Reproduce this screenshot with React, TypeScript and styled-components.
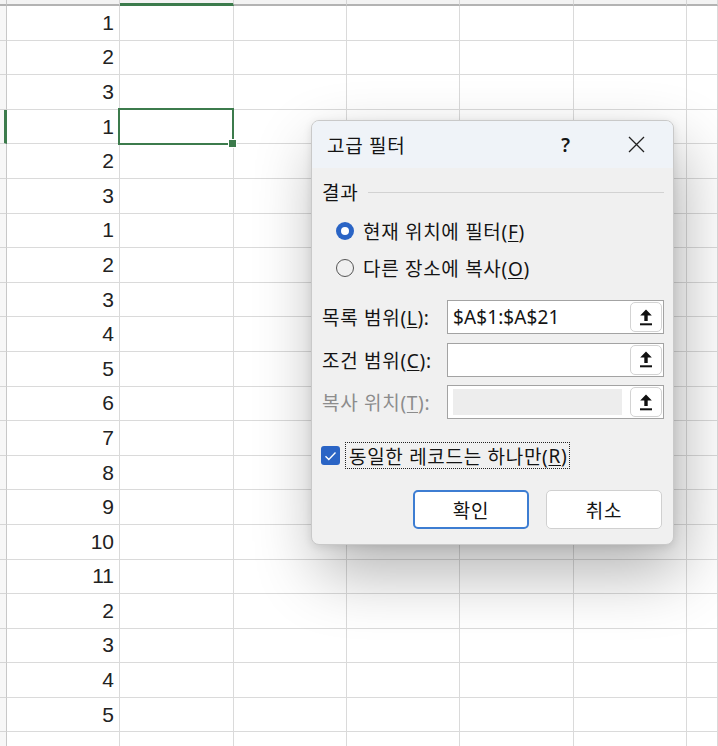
import React from 'react';
import styled, { createGlobalStyle } from 'styled-components';

const GlobalStyle = createGlobalStyle`
  html, body {
    margin: 0;
    padding: 0;
    background: #ffffff;
  }
  body {
    font-family: "Noto Sans", "Noto Sans CJK KR", sans-serif;
    color: #1a1a1a;
  }
`;

const GREEN = '#3c7b4c';
const BLUE = '#2a64c5';
const UI_FONT = `"Noto Sans", "Noto Sans CJK KR", sans-serif`;

// values shown in column A, one per row
const columnA = [1, 2, 3, 1, 2, 3, 1, 2, 3, 4, 5, 6, 7, 8, 9, 10, 11, 2, 3, 4, 5];
const colWidths = [113, 114, 113, 113, 114, 113];
const SELECTED_ROW = 3;
const SELECTED_COL = 1;

const Page = styled.div`
  position: relative;
  width: 718px;
  height: 746px;
  overflow: hidden;
`;

const Sheet = styled.div`
  display: grid;
  grid-template-columns: 7px ${colWidths.map((w) => `${w}px`).join(' ')} 1fr;
  grid-template-rows: 6px repeat(${columnA.length + 1}, 34.6px);
  width: 100%;
  height: 100%;
  background: #ffffff;
`;

const Corner = styled.div`
  background: #f3f3f3;
  border-bottom: 2px solid #b3b3b3;
  border-right: 1px solid #c8c8c8;
  box-sizing: border-box;
`;

const ColHeader = styled.div<{ $selected?: boolean }>`
  background: #f3f3f3;
  box-sizing: border-box;
  border-right: 1px solid #d6d6d6;
  border-bottom: ${(p) => (p.$selected ? `3px solid ${GREEN}` : '2px solid #b3b3b3')};
`;

const RowHeader = styled.div<{ $selected?: boolean }>`
  background: #f7f7f7;
  box-sizing: border-box;
  border-bottom: 1px solid #d6d6d6;
  border-right: ${(p) => (p.$selected ? `3px solid ${GREEN}` : '1px solid #c8c8c8')};
`;

const Cell = styled.div<{ $active?: boolean }>`
  position: relative;
  box-sizing: border-box;
  border-right: 1px solid #dadada;
  border-bottom: 1px solid #dadada;
  display: flex;
  align-items: center;
  justify-content: flex-end;
  padding-right: 5px;
  font-family: "Liberation Sans", Arial, sans-serif;
  font-size: 21px;
  color: #222222;

  ${(p) =>
    p.$active &&
    `
    &::after {
      content: '';
      position: absolute;
      left: -2px;
      top: -2px;
      right: -1px;
      bottom: -2px;
      border: 2px solid ${GREEN};
      z-index: 2;
    }
    &::before {
      content: '';
      position: absolute;
      right: -4px;
      bottom: -5px;
      width: 7px;
      height: 7px;
      background: ${GREEN};
      border: 1px solid #ffffff;
      z-index: 3;
    }
  `}
`;

const Dialog = styled.div`
  position: absolute;
  left: 311px;
  top: 120px;
  width: 363px;
  height: 425px;
  box-sizing: border-box;
  background: #f0f0f0;
  border: 1px solid #c9c9c9;
  border-radius: 8px;
  box-shadow: 8px 28px 64px rgba(0, 0, 0, 0.3), 0 2px 8px rgba(0, 0, 0, 0.1);
  overflow: hidden;
  font-family: ${UI_FONT};
  font-size: 19px;
  letter-spacing: 0.7px;
  color: #141414;
  z-index: 10;
`;

const TitleBar = styled.div`
  display: flex;
  align-items: center;
  height: 47px;
  padding-left: 15px;
  background: #eff3f8;
`;

const Title = styled.div`
  flex: 1;
`;

const HelpButton = styled.div`
  width: 66px;
  text-align: center;
  font-size: 19px;
  font-weight: 600;
`;

const CloseButton = styled.div`
  width: 74px;
  display: flex;
  justify-content: center;
  align-items: center;
`;

const Body = styled.div`
  display: flex;
  flex-direction: column;
  padding: 0 9px 0 10px;
`;

const GroupHeader = styled.div`
  display: flex;
  align-items: center;
  gap: 10px;
  margin-top: 12px;
  height: 24px;
`;

const GroupLine = styled.div`
  flex: 1;
  height: 1px;
  background: #d2d2d2;
`;

const RadioList = styled.div`
  display: flex;
  flex-direction: column;
  gap: 9px;
  margin-top: 13px;
  margin-left: 14px;
`;

const OptionRow = styled.div`
  display: flex;
  align-items: center;
  gap: 9px;
  height: 28px;
`;

const Radio = styled.span<{ $checked?: boolean }>`
  width: 18px;
  height: 18px;
  border-radius: 50%;
  box-sizing: border-box;
  flex-shrink: 0;
  display: flex;
  align-items: center;
  justify-content: center;
  background: ${(p) => (p.$checked ? BLUE : 'transparent')};
  border: ${(p) => (p.$checked ? 'none' : '1px solid #555555')};

  &::after {
    content: '';
    display: ${(p) => (p.$checked ? 'block' : 'none')};
    width: 8px;
    height: 8px;
    border-radius: 50%;
    background: #ffffff;
  }
`;

const Key = styled.span`
  text-decoration: underline;
  text-underline-offset: 2px;
`;

const FieldList = styled.div`
  display: flex;
  flex-direction: column;
  gap: 8.5px;
  margin-top: 18px;
`;

const FieldRow = styled.div`
  display: flex;
  align-items: center;
`;

const FieldLabel = styled.div<{ $disabled?: boolean }>`
  width: 125px;
  color: ${(p) => (p.$disabled ? '#8c8c8c' : '#141414')};
  white-space: nowrap;
`;

const InputBox = styled.div`
  display: flex;
  align-items: center;
  width: 217px;
  height: 34px;
  box-sizing: border-box;
  background: #ffffff;
  border: 1px solid #a3a3a3;
  padding: 0 1px 0 5px;
`;

const InputText = styled.div`
  flex: 1;
  letter-spacing: 0.1px;
`;

const DisabledFill = styled.div`
  flex: 0 0 169px;
  height: 26px;
  margin-right: 7px;
  background: #ededed;
`;

const RefButton = styled.div`
  width: 32px;
  height: 30px;
  box-sizing: border-box;
  background: #ffffff;
  border: 1px solid #d3d3d3;
  border-radius: 5px;
  display: flex;
  align-items: center;
  justify-content: center;
  margin-left: auto;
`;

const CheckRow = styled.div`
  display: flex;
  align-items: center;
  gap: 5px;
  margin-top: 23px;
  margin-left: -1px;
`;

const CheckBox = styled.span`
  width: 19px;
  height: 19px;
  border-radius: 3px;
  background: ${BLUE};
  display: flex;
  align-items: center;
  justify-content: center;
  flex-shrink: 0;
`;

const FocusLabel = styled.span`
  height: 27px;
  box-sizing: border-box;
  display: flex;
  align-items: center;
  padding: 0 2px 0 3px;
  border: 1px dotted #222222;
`;

const ButtonRow = styled.div`
  display: flex;
  justify-content: flex-end;
  gap: 17px;
  margin-top: 21px;
  margin-right: 2px;
`;

const DialogButton = styled.div<{ $primary?: boolean }>`
  width: 116px;
  height: 39px;
  box-sizing: border-box;
  display: flex;
  align-items: center;
  justify-content: center;
  background: #ffffff;
  border-radius: 5px;
  border: ${(p) => (p.$primary ? '2px solid #3d7dd2' : '1px solid #d0d0d0')};
`;

const UpArrowIcon = () => (
  <svg width="12" height="17" viewBox="0 0 12 17">
    <path d="M6 0.5 L11.8 6.6 H7.7 V12 H4.3 V6.6 H0.2 Z" fill="#111" />
    <rect x="0" y="14.3" width="12" height="2" fill="#111" />
  </svg>
);

const CloseIcon = () => (
  <svg width="17" height="17" viewBox="0 0 17 17">
    <path d="M1 1 L16 16 M16 1 L1 16" stroke="#222" strokeWidth="1.3" fill="none" />
  </svg>
);

const CheckIcon = () => (
  <svg width="13" height="10" viewBox="0 0 13 10">
    <path d="M1.5 5.2 L4.8 8.4 L11.5 1.6" stroke="#fff" strokeWidth="1.4" fill="none" />
  </svg>
);

const fields = [
  { label: '목록 범위', key: 'L', value: '$A$1:$A$21' },
  { label: '조건 범위', key: 'C', value: '' },
  { label: '복사 위치', key: 'T', value: '', disabled: true },
];

export default function App() {
  return (
    <>
      <GlobalStyle />
      <Page>
        <Sheet>
          <Corner />
          {colWidths.map((_, c) => (
            <ColHeader key={`h${c}`} $selected={c === SELECTED_COL} />
          ))}
          <ColHeader />
          {[...columnA, null].map((v, r) => (
            <React.Fragment key={`r${r}`}>
              <RowHeader $selected={r === SELECTED_ROW} />
              <Cell>{v}</Cell>
              {colWidths.slice(1).map((_, c) => (
                <Cell key={c} $active={r === SELECTED_ROW && c + 1 === SELECTED_COL} />
              ))}
              <Cell />
            </React.Fragment>
          ))}
        </Sheet>

        <Dialog>
          <TitleBar>
            <Title>고급 필터</Title>
            <HelpButton>?</HelpButton>
            <CloseButton>
              <CloseIcon />
            </CloseButton>
          </TitleBar>
          <Body>
            <GroupHeader>
              <span>결과</span>
              <GroupLine />
            </GroupHeader>
            <RadioList>
              <OptionRow>
                <Radio $checked />
                <span>
                  현재 위치에 필터(<Key>F</Key>)
                </span>
              </OptionRow>
              <OptionRow>
                <Radio />
                <span>
                  다른 장소에 복사(<Key>O</Key>)
                </span>
              </OptionRow>
            </RadioList>
            <FieldList>
              {fields.map((f) => (
                <FieldRow key={f.key}>
                  <FieldLabel $disabled={f.disabled}>
                    {f.label}(<Key>{f.key}</Key>):
                  </FieldLabel>
                  <InputBox>
                    {f.disabled ? <DisabledFill /> : <InputText>{f.value}</InputText>}
                    <RefButton>
                      <UpArrowIcon />
                    </RefButton>
                  </InputBox>
                </FieldRow>
              ))}
            </FieldList>
            <CheckRow>
              <CheckBox>
                <CheckIcon />
              </CheckBox>
              <FocusLabel>
                동일한 레코드는 하나만(<Key>R</Key>)
              </FocusLabel>
            </CheckRow>
            <ButtonRow>
              <DialogButton $primary>확인</DialogButton>
              <DialogButton>취소</DialogButton>
            </ButtonRow>
          </Body>
        </Dialog>
      </Page>
    </>
  );
}
